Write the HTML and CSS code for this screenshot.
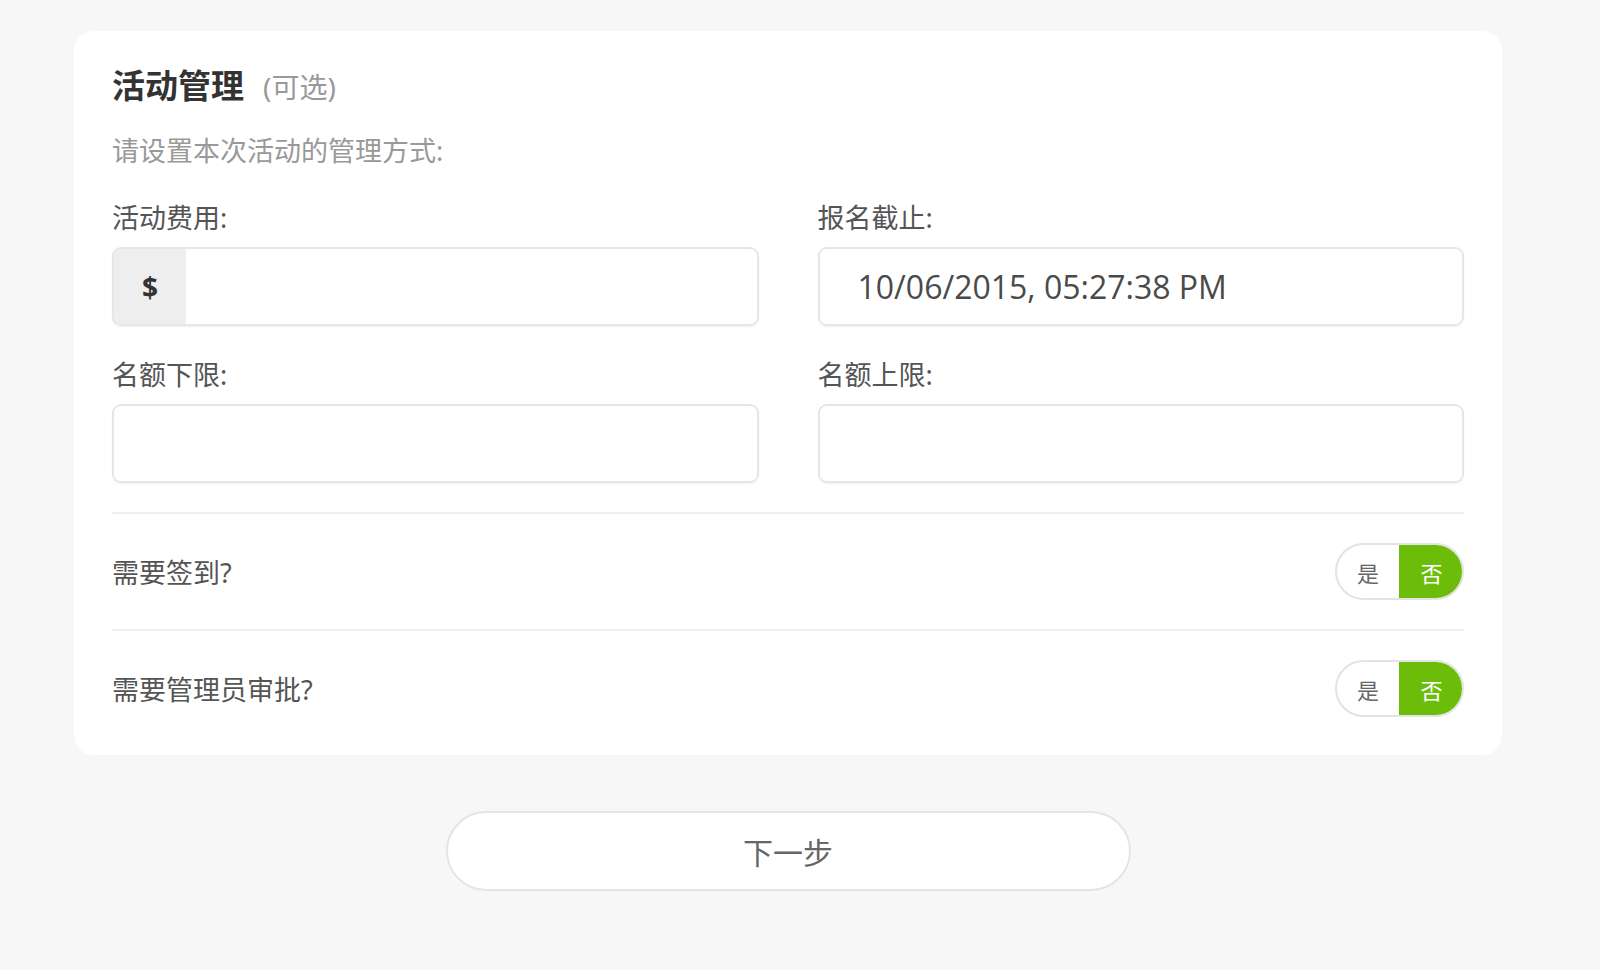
FILE: index.html
```html
<!DOCTYPE html>
<html lang="zh-CN">
<head>
    <meta charset="UTF-8">
    <meta name="viewport" content="width=device-width, initial-scale=1.0">
    <title>活动管理</title>
    <link rel="stylesheet" href="styles.css">
</head>
<body>
    <div class="page">
        <!-- Activity management card -->
        <div class="card">
            <h2 class="title">活动管理<span class="optional">(可选)</span></h2>
            <p class="hint">请设置本次活动的管理方式:</p>

            <div class="fields">
                <div class="field">
                    <label>活动费用:</label>
                    <div class="input prefixed">
                        <span class="prefix">$</span>
                        <input type="text">
                    </div>
                </div>
                <div class="field">
                    <label>报名截止:</label>
                    <div class="input">
                        <input type="text" class="date" value="10/06/2015, 05:27:38 PM">
                    </div>
                </div>
                <div class="field">
                    <label>名额下限:</label>
                    <div class="input">
                        <input type="text">
                    </div>
                </div>
                <div class="field">
                    <label>名额上限:</label>
                    <div class="input">
                        <input type="text">
                    </div>
                </div>
            </div>

            <div class="row">
                <span>需要签到?</span>
                <div class="toggle">
                    <span class="yes">是</span>
                    <span class="no active">否</span>
                </div>
            </div>
            <div class="row">
                <span>需要管理员审批?</span>
                <div class="toggle">
                    <span class="yes">是</span>
                    <span class="no active">否</span>
                </div>
            </div>
        </div>

        <button class="next">下一步</button>
    </div>
</body>
</html>
```

FILE: styles.css
```css
body {
    margin: 0;
    background: #f7f7f7;
    font-family: 'Noto Sans', 'Noto Sans CJK SC', sans-serif;
    color: #555;
}
.page {
    width: 1428px;
    margin-left: 74px;
    padding-top: 31px;
    display: flex;
    flex-direction: column;
    align-items: center;
}
.card {
    box-sizing: border-box;
    width: 100%;
    background: #fff;
    border-radius: 20px;
    padding: 35px 38px 9px 38px;
}
.title {
    margin: 0;
    font-size: 33px;
    line-height: 40px;
    font-weight: bold;
    color: #333;
}
.optional {
    margin-left: 19px;
    font-size: 28px;
    font-weight: normal;
    color: #999;
}
.hint {
    margin: 26px 0 0;
    font-size: 27px;
    line-height: 36px;
    color: #999;
}
.fields {
    display: grid;
    grid-template-columns: 1fr 1fr;
    column-gap: 59px;
    row-gap: 31px;
    margin-top: 31px;
    padding-bottom: 29px;
    border-bottom: 2px solid #eee;
}
.field label {
    display: block;
    font-size: 27px;
    line-height: 36px;
    color: #555;
    margin-bottom: 11px;
}
.input {
    box-sizing: border-box;
    display: flex;
    height: 79px;
    border: 2px solid #e6e6e6;
    border-radius: 9px;
    overflow: hidden;
    box-shadow: 0 1px 2px rgba(0, 0, 0, 0.06);
}
.input input {
    flex: 1;
    min-width: 0;
    border: none;
    outline: none;
    background: #fff;
    padding: 0 38px;
    font-family: 'Open Sans', sans-serif;
    font-size: 32px;
    color: #4a4a4a;
}
.prefix {
    width: 72px;
    display: flex;
    align-items: center;
    justify-content: center;
    background: #eee;
    font-family: 'Open Sans', sans-serif;
    font-weight: bold;
    font-size: 28px;
    color: #333;
}
.row {
    display: flex;
    align-items: center;
    justify-content: space-between;
    height: 115px;
    font-size: 27px;
    color: #555;
}
.row + .row {
    border-top: 2px solid #eee;
}
.toggle {
    display: flex;
    height: 57px;
    border-radius: 29px;
    overflow: hidden;
    border: 2px solid #e3e3e3;
    box-sizing: border-box;
    font-size: 22px;
}
.toggle span {
    width: 62px;
    display: flex;
    align-items: center;
    justify-content: center;
    color: #666;
}
.toggle .active {
    background: #6cbd0a;
    color: #fff;
    margin: -2px -2px -2px 0;
    width: 65px;
}
.next {
    margin-top: 56px;
    width: 685px;
    height: 80px;
    border-radius: 40px;
    border: 2px solid #e4e4e4;
    background: #fff;
    font-family: 'Noto Sans', 'Noto Sans CJK SC', sans-serif;
    font-size: 30px;
    color: #666;
    cursor: pointer;
}
```
